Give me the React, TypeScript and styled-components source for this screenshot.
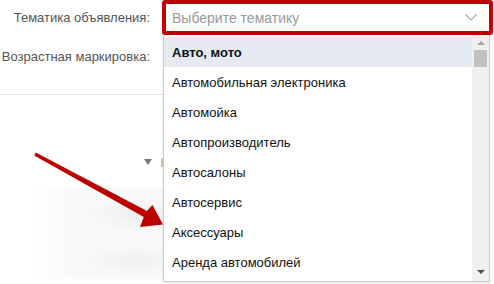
import React from "react";
import styled, { createGlobalStyle } from "styled-components";

const GlobalStyle = createGlobalStyle`
	body {
		margin: 0;
		font-family: "Liberation Sans", Arial, sans-serif;
		background: #fff;
	}
`;

const Page = styled.div`
	position: relative;
	width: 494px;
	height: 284px;
	overflow: hidden;
	background: #fff;
`;

const Form = styled.div`
	display: flex;
	flex-direction: column;
`;

const Row = styled.div<{ $h: number }>`
	display: flex;
	align-items: center;
	gap: 12px;
	height: ${(p) => p.$h}px;
`;

const Label = styled.div`
	width: 150px;
	flex-shrink: 0;
	display: flex;
	justify-content: flex-end;
	white-space: nowrap;
	font-size: 13px;
	color: #555;
`;

const Select = styled.div`
	box-sizing: border-box;
	width: 331px;
	height: 35px;
	border: 4px solid #c10000;
	border-radius: 3px;
	padding: 0 12px 0 6px;
	display: flex;
	align-items: center;
	justify-content: space-between;
	background: #fff;
`;

const Placeholder = styled.span`
	font-size: 14px;
	color: #999;
`;

const Divider = styled.div`
	margin-top: 16px;
	width: 163px;
	height: 1px;
	background: #dfe4ea;
`;

const Lower = styled.div`
	display: flex;
	flex-direction: column;
	align-items: flex-end;
	width: 163px;
`;

const Toggle = styled.div`
	display: flex;
	align-items: center;
	gap: 9px;
	margin-top: 62px;
	height: 10px;
`;

const Caret = styled.span`
	width: 0;
	height: 0;
	border-left: 4px solid transparent;
	border-right: 4px solid transparent;
	border-top: 6px solid #777;
`;

const Edge = styled.span`
	width: 2px;
	height: 9px;
	background: #e9c09a;
`;

const Shade = styled.div`
	margin-top: 20px;
	width: 135px;
	height: 92px;
	background:
		radial-gradient(ellipse 60px 18px at 85% 30%, rgba(0, 0, 0, 0.045), transparent),
		radial-gradient(ellipse 60px 16px at 80% 80%, rgba(0, 0, 0, 0.035), transparent),
		linear-gradient(to right, #fff, #f9f9f9 35%, #f9f9f9);
`;

const Dropdown = styled.div`
	position: absolute;
	top: 35px;
	left: 163px;
	width: 327px;
	height: 247px;
	box-sizing: border-box;
	border: 1px solid #ccc;
	border-top: none;
	background: #fff;
	display: flex;
	box-shadow: 0 2px 3px rgba(0, 0, 0, 0.08);
`;

const List = styled.div`
	flex: 1;
	padding-top: 2px;
	overflow: hidden;
`;

const Option = styled.div<{ $active?: boolean }>`
	height: 30px;
	padding-left: 8px;
	display: flex;
	align-items: center;
	font-size: 13px;
	color: #111;
	font-weight: ${(p) => (p.$active ? 700 : 400)};
	background: ${(p) => (p.$active ? "#e5eaf1" : "transparent")};
`;

const Scrollbar = styled.div`
	width: 17px;
	background: #f0f0f0;
	display: flex;
	flex-direction: column;
	align-items: center;
	padding: 6px 0 7px;
	box-sizing: border-box;
`;

const ScrollArrow = styled.span<{ $down?: boolean }>`
	width: 0;
	height: 0;
	border-left: 4px solid transparent;
	border-right: 4px solid transparent;
	${(p) => (p.$down ? "border-top: 4px solid #505050;" : "border-bottom: 4px solid #a3a3a3;")}
`;

const Thumb = styled.div`
	margin-top: 5px;
	width: 13px;
	height: 17px;
	background: #c1c1c1;
`;

const Spacer = styled.div`
	flex: 1;
`;

const ArrowOverlay = styled.svg`
	position: absolute;
	left: 0;
	top: 0;
	pointer-events: none;
`;

const options = [
	"Авто, мото",
	"Автомобильная электроника",
	"Автомойка",
	"Автопроизводитель",
	"Автосалоны",
	"Автосервис",
	"Аксессуары",
	"Аренда автомобилей",
];

const App = () => {
	return (
		<>
			<GlobalStyle />
			<Page>
				<Form>
					<Row $h={35}>
						<Label>Тематика объявления:</Label>
						<Select>
							<Placeholder>Выберите тематику</Placeholder>
							<svg width="12" height="7" viewBox="0 0 12 7">
								<path d="M0.5 0.5 L6 6 L11.5 0.5" fill="none" stroke="#aaa" strokeWidth="1.2" />
							</svg>
						</Select>
					</Row>
					<Row $h={43}>
						<Label>Возрастная маркировка:</Label>
					</Row>
					<Divider />
					<Lower>
						<Toggle>
							<Caret />
							<Edge />
						</Toggle>
						<Shade />
					</Lower>
				</Form>
				<Dropdown>
					<List>
						{options.map((o, i) => (
							<Option key={o} $active={i === 0}>
								{o}
							</Option>
						))}
					</List>
					<Scrollbar>
						<ScrollArrow />
						<Thumb />
						<Spacer />
						<ScrollArrow $down />
					</Scrollbar>
				</Dropdown>
				<ArrowOverlay width="494" height="284" viewBox="0 0 494 284">
					<polygon
						points="35.8,152.4 147,211 152.5,205 163,224.5 140,227 143.8,217 34.2,155.6"
						fill="#bb0000"
					/>
				</ArrowOverlay>
			</Page>
		</>
	);
};

export default App;
